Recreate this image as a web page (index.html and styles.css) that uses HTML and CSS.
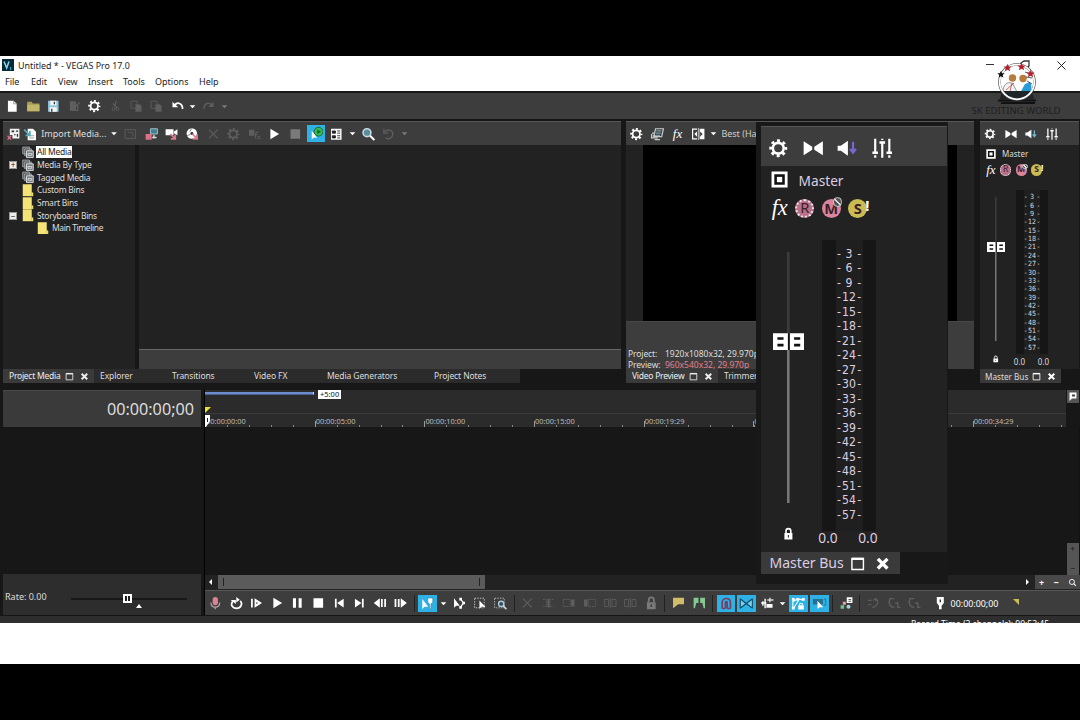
FILE: index.html
```html
<!DOCTYPE html>
<html lang="en">
<head>
  <meta charset="UTF-8" />
  <title>Untitled * - VEGAS Pro 17.0</title>
  <link rel="stylesheet" href="styles.css">
</head>
<body>
  <!-- Icon shapes, reused below -->
  <svg class="sprite" width="0" height="0">
    <symbol id="gear" viewBox="0 0 16 16"><circle cx="8" cy="8" r="4.2" fill="none" stroke="currentColor" stroke-width="2"/><circle cx="8" cy="8" r="5.900" fill="none" stroke="currentColor" stroke-width="2.200" stroke-dasharray="2.300 2.334" stroke-dashoffset="1.150"/></symbol>
    <symbol id="new" viewBox="0 0 16 16"><path d="M3 2h6.500L13 5.500V14.500H3z" fill="#fff"/><path d="M9.500 2v3.500H13" fill="none" stroke="#777" stroke-width=".8"/></symbol>
    <symbol id="folder" viewBox="0 0 16 16"><path d="M1 3h5l1.500 2H15v9H1z" fill="#a99d55"/><path d="M1 6.500h14V14H1z" fill="#c2b66b"/></symbol>
    <symbol id="save" viewBox="0 0 16 16"><path d="M2 2h12v12.500H2z" fill="#8cc6df"/><path d="M4.500 2h7v5h-7zM4 9.500h8v5H4z" fill="#f5f5f5"/><path d="M8.500 3h1.500v3H8.500zM5.500 11H7v3.500H5.500z" fill="#333"/></symbol>
    <symbol id="render" viewBox="0 0 16 16"><path d="M3 2.500h7v11H3z" fill="currentColor"/><path d="M8 10l6-6M12 7v6H6" fill="none" stroke="currentColor" stroke-width="1.500"/></symbol>
    <symbol id="cut" viewBox="0 0 16 16"><path d="M9 2L7.500 9M5 5l5 5" stroke="currentColor" stroke-width="1.300"/><circle cx="6" cy="11.500" r="1.700" fill="none" stroke="currentColor"/><circle cx="10.500" cy="11.500" r="1.700" fill="none" stroke="currentColor"/></symbol>
    <symbol id="copy" viewBox="0 0 16 16"><path d="M2 2.500h7v8H2z" fill="none" stroke="currentColor"/><path d="M7 6h5l2 2v6.500H7z" fill="currentColor"/></symbol>
    <symbol id="undo" viewBox="0 0 16 16"><path d="M2.500 3v6.500H9z" fill="currentColor"/><path d="M5 7c3-4 9-2.500 9 4.500" fill="none" stroke="currentColor" stroke-width="2"/></symbol>
    <symbol id="redo" viewBox="0 0 16 16"><path d="M14 3v6H8z" fill="currentColor"/><path d="M12 7C9 3 3 4.500 3 11.500" fill="none" stroke="currentColor" stroke-width="1.600"/></symbol>
    <symbol id="down" viewBox="0 0 8 8"><path d="M.8 2.500h6.400L4 6z" fill="currentColor"/></symbol>
    <symbol id="offline" viewBox="0 0 16 16"><path d="M4 2h11v11H7V9H4z" fill="#f2f2f2"/><path d="M6 4h3v2H6zM11 4h2.500v1.500H11zM9 8h1.500v1.500H9zM12 8h1.500v3H12z" fill="#333"/><path d="M1.500 10l4 4.500M5.500 10l-4 4.500" stroke="#d9758f" stroke-width="1.500"/></symbol>
    <symbol id="import" viewBox="0 0 16 16"><path d="M5 2h6l3.500 3.500V15H5z" fill="#fff"/><path d="M6.500 10h6M6.500 12.500h6" stroke="#999"/><path d="M1 3l6 6M7.500 4.500v5h-5" fill="none" stroke="#55a9bd" stroke-width="2"/></symbol>
    <symbol id="bracketbox" viewBox="0 0 16 16"><path d="M2 3h12v10H2zM5 6h6v5" fill="none" stroke="currentColor" stroke-width="1"/></symbol>
    <symbol id="capture" viewBox="0 0 16 16"><path d="M7 2h8v6H7z" fill="#477f91" stroke="#aacbd5"/><path d="M1.500 8h7v6.500h-7z" fill="#dc6f87"/><path d="M11 9v4M9 12h5" stroke="#ddd" stroke-width="1.500"/></symbol>
    <symbol id="camera" viewBox="0 0 16 16"><path d="M1.500 2.500h9v7h-9zM11 5l4-2.500v7L11 7z" fill="#fff"/><path d="M7 8l5 5M12.500 8.500v5h-5" fill="none" stroke="#d9798e" stroke-width="2"/></symbol>
    <symbol id="disc" viewBox="0 0 16 16"><circle cx="7.500" cy="7.500" r="6" fill="#fff"/><circle cx="7.500" cy="7.500" r="1.700" fill="#333"/><path d="M7.500 1.500L5 5.500M2 10l3.500-1.500" stroke="#777"/><path d="M8 8l5 5M13.500 8.500v5h-5" fill="none" stroke="#d9798e" stroke-width="2"/></symbol>
    <symbol id="x" viewBox="0 0 16 16"><path d="M3 3l10 10M13 3L3 13" stroke="currentColor" stroke-width="1.300"/></symbol>
    <symbol id="bigx" viewBox="0 0 16 16"><path d="M3 3l10 10M13 3L3 13" stroke="currentColor" stroke-width="3.500"/></symbol>
    <symbol id="max" viewBox="0 0 16 16"><path d="M2 2.500h12v11.500H2z" fill="none" stroke="currentColor" stroke-width="1.500"/><path d="M2 3h12" stroke="currentColor" stroke-width="2.500"/></symbol>
    <symbol id="mediafx" viewBox="0 0 16 16"><path d="M2 3h6v7H2z" fill="currentColor"/><path d="M9 13l1-7h3M8.500 8.500h3M11 10l4 4M15 10l-4 4" fill="none" stroke="currentColor" stroke-width="1.200"/></symbol>
    <symbol id="play" viewBox="0 0 16 16"><path d="M3.500 2l10 6-10 6z" fill="currentColor"/></symbol>
    <symbol id="stop" viewBox="0 0 16 16"><path d="M2.500 2.500h11v11h-11z" fill="currentColor"/></symbol>
    <symbol id="autoplay" viewBox="0 0 16 16"><circle cx="10.500" cy="6" r="4.800" fill="#35bd51" stroke="#17612c"/><path d="M9 3.500l4.500 2.500L9 8.500z" fill="#163"/><path d="M3 5v9.500l2.300-2 3.700.2z" fill="#fff"/></symbol>
    <symbol id="views" viewBox="0 0 16 16"><path d="M2 2h12v12.500H2z" fill="#fff"/><path d="M3.500 4.500H7V7H3.500zM9 4.500h3.500M9 7h3.500M3.500 10H7v2.500H3.500zM9 10h3.500M9 12.500h3.500" fill="#222" stroke="#222" stroke-width="1"/></symbol>
    <symbol id="search" viewBox="0 0 16 16"><circle cx="6.500" cy="6.500" r="4.500" fill="#5d8c9b" stroke="#c3dce5" stroke-width="1.800"/><path d="M10 10l5 5" stroke="#fff" stroke-width="2.300"/></symbol>
    <symbol id="refresh" viewBox="0 0 16 16"><path d="M3 2v5h5" fill="none" stroke="currentColor" stroke-width="1.600"/><path d="M4 6c3-5 10-2 9 3-.6 4-5 5.500-8 3.500" fill="none" stroke="currentColor" stroke-width="1.600"/></symbol>
    <symbol id="bins" viewBox="0 0 16 16"><path d="M1 1h9v9H1zM3.500 3.500h9v9h-9z" fill="#555" stroke="#9a9fa4" stroke-width="1.300"/><path d="M6 6h9v9H6z" fill="#777c82" stroke="#d5d9dc" stroke-width="1.300"/><path d="M8 9.500h5v2.500H8z" fill="none" stroke="#eee"/></symbol>
    <symbol id="bin" viewBox="0 0 16 16"><path d="M1 0h12v11h2v5H1z" fill="#f4e477"/><path d="M13 11v5" stroke="#cdb94d"/></symbol>
    <symbol id="external" viewBox="0 0 16 16"><path d="M6 2h9l-2 9H4zM2 7h3M3 10h8M5 14.500h6" fill="none" stroke="#c5ccd0" stroke-width="1.400"/><path d="M7 4.500h5.500M6.500 7H12M6 9.500h5" stroke="#7699a4" stroke-width="1.300"/><path d="M1.500 8v4.500h7" fill="none" stroke="#ccc" stroke-width="1.500"/></symbol>
    <symbol id="split" viewBox="0 0 16 16"><path d="M6.500 2.500h-5v11h5" fill="none" stroke="#fff" stroke-width="1.400"/><path d="M9.500 2h5.500v12H9.500z" fill="#fff"/><path d="M8 1v14" stroke="#ddd"/><path d="M6.500 5v6L3.500 8z" fill="#fff"/><path d="M10 5v6l3-3z" fill="#444"/></symbol>
    <symbol id="downmix" viewBox="0 0 16 16"><path d="M.5 2.500L7.200 6.800v2.400L.5 13.500zM15.500 2.500L8.800 6.800v2.400l6.700 4.300z" fill="#fff"/></symbol>
    <symbol id="dim" viewBox="0 0 16 16"><path d="M.5 6H3l5.500-3.800v11.600L3 10H.5z" fill="#fff"/><path d="M12.500 3v8M10.200 8.500l2.300 3 2.300-3" fill="none" stroke="var(--arrow)" stroke-width="1.700"/></symbol>
    <symbol id="sliders" viewBox="0 0 16 16"><path d="M2.500 .5v11M8 3v12.500M13.500 .5v11M2.500 13.500v2M8 .5v1M13.500 13.500v2" stroke="#fff" stroke-width="1.700"/><path d="M.3 10.500h4.400v2H.3zM5.800 2.500h4.400v2H5.800zM11.300 10.500h4.400v2h-4.400z" fill="#fff"/></symbol>
    <symbol id="target" viewBox="0 0 16 16"><path d="M1.800 1.800h12.400v12.400H1.800z" fill="#111" stroke="#fff" stroke-width="2.600"/><path d="M5.500 5.500h5v5h-5z" fill="#fff"/></symbol>
    <symbol id="lock" viewBox="0 0 16 16"><path d="M3 7h10v8H3z" fill="currentColor"/><path d="M5 7V4.500c0-4 6-4 6 0V7" fill="none" stroke="currentColor" stroke-width="2"/><path d="M7.300 9.500h1.400v3H7.300z" fill="#333"/></symbol>
    <symbol id="fader" viewBox="0 0 36 19"><path d="M0 0h17v19H0zM19 0h17v19H19z" fill="#fff"/><path d="M5 6h7M5 13.500h7M24 6h7M24 13.500h7" stroke="#111" stroke-width="3"/><path d="M17 0v19h2V0z" fill="#111"/></symbol>
    <symbol id="mic" viewBox="0 0 16 16"><rect x="5" y="1" width="6" height="9.500" rx="3" fill="#dc8293"/><path d="M3 7.500c0 7 10 7 10 0M8 12.500V15" fill="none" stroke="#b5a0a4" stroke-width="1.400"/></symbol>
    <symbol id="loop" viewBox="0 0 16 16"><path d="M4 6c-3 4-.5 8 4 8 5.500 0 7.500-5.500 4.500-8.500" fill="none" stroke="#fff" stroke-width="2"/><path d="M1.500 4.500h6V9zM8 1v6.500l4-3.200z" fill="#fff"/></symbol>
    <symbol id="playstart" viewBox="0 0 16 16"><path d="M2 3h2v10H2zM6 2.500L14.500 8 6 13.500z" fill="#fff"/><path d="M8 6.500v3l2-1.500z" fill="#555"/></symbol>
    <symbol id="pause" viewBox="0 0 16 16"><path d="M3 2.500h3.500v11H3zM9.500 2.500H13v11H9.500z" fill="#fff"/></symbol>
    <symbol id="first" viewBox="0 0 16 16"><path d="M3 3h2v10H3zM13 3v10L5.500 8z" fill="#fff"/></symbol>
    <symbol id="last" viewBox="0 0 16 16"><path d="M11 3h2v10h-2zM3 3v10l7.500-5z" fill="#fff"/></symbol>
    <symbol id="stepback" viewBox="0 0 16 16"><path d="M7.500 2.500v11L.5 8zM8.800 3.500h2v9h-2zM12.500 3.500h2v9h-2z" fill="#fff"/></symbol>
    <symbol id="stepfwd" viewBox="0 0 16 16"><path d="M8.500 2.500v11l7-5.500zM5.200 3.500h2v9h-2zM1.500 3.500h2v9h-2z" fill="#fff"/></symbol>
    <symbol id="edit" viewBox="0 0 16 16"><path d="M2.500 3v11l2.500-2.500 4 .2z" fill="#fff"/><path d="M8.500 2H14v4.500l-2 2V14h-1.500V8.500l-2-2z" fill="#fff" stroke="#277b9d" stroke-width=".6"/></symbol>
    <symbol id="envelope" viewBox="0 0 16 16"><path d="M2 2.500v11L4.500 11l4 .2z" fill="#fff"/><path d="M9 3l4 5-4 5" fill="none" stroke="#fff" stroke-width="1.400"/><path d="M8 2h3v3H8zM11.500 6.500h3v3h-3zM8 11.500h3v3H8z" fill="#fff"/></symbol>
    <symbol id="select" viewBox="0 0 16 16"><path d="M1.500 2.500h11v11h-11z" fill="none" stroke="#ccc" stroke-dasharray="1.700 1.300"/><path d="M7 5v9.500l2.500-2.200 4.500.2z" fill="#fff"/></symbol>
    <symbol id="zoomsel" viewBox="0 0 16 16"><path d="M1.500 2.500h11v11h-11z" fill="none" stroke="#bbb" stroke-dasharray="1.700 1.300"/><circle cx="9" cy="9" r="3" fill="#446" stroke="#a7cfd4" stroke-width="1.500"/><path d="M11.500 11.500L15 15" stroke="#cde" stroke-width="1.800"/></symbol>
    <symbol id="trim" viewBox="0 0 16 16"><path d="M2 4h4v8H2M14 4h-4v8h4" fill="none" stroke="currentColor" stroke-dasharray="2 1"/><path d="M7 3h2.500v10H7z" fill="currentColor"/></symbol>
    <symbol id="trimr" viewBox="0 0 16 16"><path d="M1 4h8v8H1z" fill="none" stroke="currentColor" stroke-dasharray="2 1"/><path d="M10 4h4v8h-4z" fill="currentColor"/></symbol>
    <symbol id="triml" viewBox="0 0 16 16"><path d="M7 4h8v8H7z" fill="none" stroke="currentColor" stroke-dasharray="2 1"/><path d="M2 4h4v8H2z" fill="currentColor"/></symbol>
    <symbol id="splitev" viewBox="0 0 16 16"><path d="M1.500 4H6v8H1.500zM10 4h4.500v8H10zM8 2v12" fill="none" stroke="currentColor"/></symbol>
    <symbol id="flag" viewBox="0 0 16 16"><path d="M2 2h12.500v7.500H8L2 14z" fill="#cfbd68"/></symbol>
    <symbol id="region" viewBox="0 0 16 16"><path d="M1.500 2H7v6H4.500L3 14H1.500zM9 2h5.500v12H13l-1.500-6H9z" fill="#86c990"/></symbol>
    <symbol id="snap" viewBox="0 0 16 16"><path d="M3.500 13.500V7c0-6 9-6 9 0v6.500M7 13.500V7.500c0-2 2-2 2 0v6M3.500 13.500H7M9 13.500h3.500" fill="none" stroke="#7c3b5d" stroke-width="1.800"/></symbol>
    <symbol id="crossfade" viewBox="0 0 16 16"><path d="M1.500 2.500v11M14.500 2.500v11M1.500 3l13 10M14.500 3l-13 10" fill="none" stroke="#174e67" stroke-width="1.500"/><path d="M2 4.500L6.500 8 2 11.500zM14 4.500L9.500 8l4.500 3.500z" fill="#7fcdec"/></symbol>
    <symbol id="ripple" viewBox="0 0 16 16"><path d="M1 8h6M5.500 3v11M3 6v5" stroke="#fff" stroke-width="1.600"/><path d="M7 9h7v4.500H7z" fill="#fff"/><path d="M8 4.500h7M11 2v5" stroke="#ddd" stroke-width="1.600"/></symbol>
    <symbol id="lockenv" viewBox="0 0 16 16"><path d="M2 13V6l5-3 6 1M3 13l5-8" fill="none" stroke="#fff" stroke-width="1.200"/><path d="M1 11.500h3v3H1zM1 2h3v3H1zM6 2h3v3H6zM12 2h3v3h-3z" fill="#fff"/><path d="M8 10h6v4.500H8z" fill="#fff"/><path d="M9.500 10V8h3v2" fill="none" stroke="#fff"/></symbol>
    <symbol id="ignore" viewBox="0 0 16 16"><path d="M1 3h11v6H1z" fill="#256f8f"/><path d="M13 3h2v7h-2" fill="none" stroke="#256f8f"/><path d="M6 5v9l2.300-2 4 .2z" fill="#fff"/></symbol>
    <symbol id="group" viewBox="0 0 16 16"><path d="M8.500 1.500H15V8H8.500z" fill="#fff"/><path d="M10.500 4h3M10.500 6h3" stroke="#444"/><path d="M1.500 10.500h4v4h-4z" fill="#6dc38a"/><path d="M4 6.500h3.500V10H4z" fill="#e7a1ad"/><circle cx="10.500" cy="12.200" r="2.300" fill="#a7d3e0"/></symbol>
    <symbol id="sync" viewBox="0 0 16 16"><path d="M2 5h4M2 10h4M8 5c3-3 6 0 5 3s-4 5-6 5M11 2v4" fill="none" stroke="currentColor" stroke-width="1.400"/></symbol>
    <symbol id="sync2" viewBox="0 0 16 16"><path d="M4 2C0 7 3 13 8 13M3 3h5M9 8h3v5h3" fill="none" stroke="currentColor" stroke-width="1.500"/></symbol>
    <symbol id="marker" viewBox="0 0 16 16"><path d="M4 1h8v7l-2.500 3V15h-3v-4L4 8z" fill="#fff"/><path d="M7.200 4h1.600v3H7.200z" fill="#333"/></symbol>
  </svg>

  <div class="window">
    <div class="titlebar">
      <svg class="app-icon" viewBox="0 0 12 12"><path d="M0 0h12v12H0z" fill="#062a38"/><path d="M2 2.500L4.700 9 7 2.500" fill="none" stroke="#8cd9ea" stroke-width="1.500"/><path d="M8.500 8v3" stroke="#28a6c9" stroke-width="1.200"/></svg>
      <span class="title">Untitled * - VEGAS Pro 17.0</span>
      <svg class="minimize" viewBox="0 0 8 8"><path d="M0 3.500h8" stroke="#333" stroke-width="1"/></svg>
      <svg class="close" viewBox="0 0 9 9"><path d="M.5.500l8 8M8.500.500l-8 8" stroke="#222" stroke-width="1"/></svg>
    </div>
    <div class="menubar">
      <span class="m-file">File</span><span class="m-edit">Edit</span><span class="m-view">View</span><span class="m-insert">Insert</span><span class="m-tools">Tools</span><span class="m-options">Options</span><span class="m-help">Help</span>
    </div>

    <div class="toolbar main-tools">
      <svg><use href="#new"/></svg><svg><use href="#folder"/></svg><svg><use href="#save"/></svg><svg class="off"><use href="#render"/></svg><svg><use href="#gear"/></svg><svg class="off"><use href="#cut"/></svg><svg class="off"><use href="#copy"/></svg><svg class="off"><use href="#copy"/></svg><svg><use href="#undo"/></svg><svg class="dd"><use href="#down"/></svg><svg class="off"><use href="#redo"/></svg><svg class="dd off2"><use href="#down"/></svg>
    </div>

    <div class="docks">
      <section class="media">
        <div class="toolbar">
          <svg><use href="#offline"/></svg><svg class="import-icon"><use href="#import"/></svg><span class="import">Import Media...</span><svg class="dd"><use href="#down"/></svg>
          <svg class="off"><use href="#bracketbox"/></svg><svg><use href="#capture"/></svg><svg><use href="#camera"/></svg><svg><use href="#disc"/></svg><svg class="off"><use href="#x"/></svg><svg class="off"><use href="#gear"/></svg><svg class="off"><use href="#mediafx"/></svg><svg><use href="#play"/></svg><svg class="off2"><use href="#stop"/></svg><svg class="on"><use href="#autoplay"/></svg><svg><use href="#views"/></svg><svg class="dd"><use href="#down"/></svg><svg><use href="#search"/></svg><svg class="off"><use href="#refresh"/></svg><svg class="dd off2"><use href="#down"/></svg>
        </div>
        <div class="media-body">
          <ul class="tree">
            <li><i></i><svg><use href="#bins"/></svg><span class="selected">All Media</span></li>
            <li><i class="box">+</i><svg><use href="#bins"/></svg><span>Media By Type</span></li>
            <li><i></i><svg><use href="#bins"/></svg><span>Tagged Media</span></li>
            <li><i></i><svg><use href="#bin"/></svg><span>Custom Bins</span></li>
            <li><i></i><svg><use href="#bin"/></svg><span>Smart Bins</span></li>
            <li><i class="box">−</i><svg><use href="#bin"/></svg><span>Storyboard Bins</span></li>
            <li class="child"><i></i><svg><use href="#bin"/></svg><span>Main Timeline</span></li>
          </ul>
          <div class="media-view"><div class="media-info"></div></div>
        </div>
        <div class="tabs">
          <div class="tab active t-media"><span>Project Media</span><svg><use href="#max"/></svg><svg><use href="#bigx"/></svg></div>
          <div class="tab t-explorer">Explorer</div>
          <div class="tab t-trans">Transitions</div>
          <div class="tab t-fx">Video FX</div>
          <div class="tab t-gen">Media Generators</div>
          <div class="tab t-notes">Project Notes</div>
        </div>
      </section>

      <section class="preview">
        <div class="toolbar">
          <svg><use href="#gear"/></svg><svg><use href="#external"/></svg><span class="fx">fx</span><svg><use href="#split"/></svg><svg class="dd"><use href="#down"/></svg><span class="quality">Best (Half)</span>
        </div>
        <div class="video"><div class="screen"></div></div>
        <div class="preview-info">
          <div><b>Project:</b><span>1920x1080x32, 29.970p</span></div>
          <div><b>Preview:</b><span class="pink">960x540x32, 29.970p</span></div>
        </div>
        <div class="tabs">
          <div class="tab active t-preview"><span>Video Preview</span><svg><use href="#max"/></svg><svg><use href="#bigx"/></svg></div>
          <div class="tab t-trimmer">Trimmer</div>
        </div>
      </section>

      <section class="mixer">
        <div class="mixer-head">
          <svg><use href="#gear"/></svg><svg><use href="#downmix"/></svg><svg><use href="#dim"/></svg><svg><use href="#sliders"/></svg>
        </div>
        <div class="mixer-body">
          <div class="bus-name"><svg><use href="#target"/></svg><span>Master</span></div>
          <div class="bus-fx"><span class="fx">fx</span><span class="auto">R</span><span class="mute">M<i></i></span><span class="solo">S<i>!</i></span></div>
          <div class="channel">
            <div class="fader"><svg class="thumb"><use href="#fader"/></svg></div>
            <div class="meter">
              <div class="scale"><span>3</span><span>6</span><span>9</span><span>12</span><span>15</span><span>18</span><span>21</span><span>24</span><span>27</span><span>30</span><span>33</span><span>36</span><span>39</span><span>42</span><span>45</span><span>48</span><span>51</span><span>54</span><span>57</span></div>
            </div>
          </div>
          <div class="levels"><svg><use href="#lock"/></svg><span>0.0</span><span>0.0</span></div>
        </div>
        <div class="mixer-tab"><span>Master Bus</span><svg><use href="#max"/></svg><svg><use href="#bigx"/></svg></div>
      </section>
    </div>

    <div class="timeline">
      <div class="track-side">
        <div class="timecode">00:00:00;00</div>
        <div class="tracks"></div>
        <div class="rate">
          <span>Rate: 0.00</span>
          <div class="rate-slider"><i class="rate-thumb"></i><i class="rate-mark"></i></div>
        </div>
      </div>
      <div class="track-main">
        <div class="ruler-row">
          <div class="ruler">
            <div class="loop-bar"><div class="loop-line"></div><span>+5:00</span></div>
            <div class="ticks">
              <span>00:00:00:00</span><span>00:00:05:00</span><span>00:00:10:00</span><span>00:00:15:00</span><span>00:00:19:29</span><span>00:00:24:29</span><span>00:00:29:29</span><span>00:00:34:29</span>
            </div>
            <svg class="playhead" viewBox="0 0 6 22"><path d="M0 0h6L0 6z" fill="#e9e92a"/><path d="M0 8h5v6l-4 6H0z" fill="#fff"/><path d="M2 11h1v4H2z" fill="#222"/></svg>
          </div>
          <svg class="corner" viewBox="0 0 12 13"><path d="M0 0h12v13H0z" fill="#555"/><path d="M2.500 2.500h7v6H5L2.500 11z" fill="#fff"/><path d="M5 4.500h3v2H5z" fill="#444"/></svg>
        </div>
        <div class="events"><div class="vzoom"><span>+</span><span>−</span></div></div>
        <div class="scroll-row">
          <div class="arrow left"></div>
          <div class="scroll-thumb"><i></i><i></i></div>
          <div class="track"></div>
          <div class="arrow right"></div>
          <div class="hzoom"><span>+</span><span>−</span><svg viewBox="0 0 16 16"><circle cx="7" cy="7" r="4.500" fill="none" stroke="#fff" stroke-width="1.600"/><path d="M10 10l4 4" stroke="#fff" stroke-width="2"/></svg></div>
        </div>
        <div class="toolbar transport">
          <svg><use href="#mic"/></svg><svg><use href="#loop"/></svg><svg><use href="#playstart"/></svg><svg><use href="#play"/></svg><svg><use href="#pause"/></svg><svg><use href="#stop"/></svg><svg><use href="#first"/></svg><svg><use href="#last"/></svg><svg><use href="#stepback"/></svg><svg><use href="#stepfwd"/></svg><i class="sep"></i>
          <svg class="on"><use href="#edit"/></svg><svg class="dd"><use href="#down"/></svg><svg><use href="#envelope"/></svg><svg><use href="#select"/></svg><svg><use href="#zoomsel"/></svg><i class="sep"></i>
          <svg class="off"><use href="#x"/></svg><svg class="off"><use href="#trim"/></svg><svg class="off"><use href="#trimr"/></svg><svg class="off"><use href="#triml"/></svg><svg class="off"><use href="#splitev"/></svg><svg class="off"><use href="#splitev"/></svg><svg class="off2"><use href="#lock"/></svg><i class="sep"></i>
          <svg><use href="#flag"/></svg><svg><use href="#region"/></svg><i class="sep"></i>
          <svg class="on"><use href="#snap"/></svg><svg class="on"><use href="#crossfade"/></svg><svg><use href="#ripple"/></svg><svg class="dd"><use href="#down"/></svg><svg class="on"><use href="#lockenv"/></svg><svg class="on"><use href="#ignore"/></svg><i class="sep"></i>
          <svg><use href="#group"/></svg><i class="sep"></i>
          <svg class="off"><use href="#sync"/></svg><svg class="off"><use href="#sync2"/></svg><svg class="off"><use href="#sync2"/></svg>
          <svg class="cursor-icon"><use href="#marker"/></svg><span class="cursor-time">00:00:00;00</span><i class="sel-corner"></i>
        </div>
      </div>
    </div>
    <div class="status"><span>Record Time (2 channels): 90:53:45</span></div>

    <!-- Channel logo, on top of the title bar -->
    <div class="logo">
      <svg viewBox="0 0 42 44">
        <path d="M25 8V3l3-2h5v5l-3 3z" fill="#fff" stroke="#333" stroke-width="1.300"/>
        <circle cx="21" cy="22" r="18" fill="#fff"/>
        <path d="M7 30c1-7 6-9 10-6l4 8H9z" fill="#f3f3f3" stroke="#555" stroke-width=".6"/>
        <path d="M10 30l8-7M14 31l2-8" stroke="#b33" stroke-width=".7"/>
        <path d="M24 33l5-9 5-2c2 3 2 7 0 11z" fill="#299bd6"/>
        <circle cx="16.500" cy="18" r="3.700" fill="#b77b3b"/><circle cx="27" cy="18.500" r="3.700" fill="#b77b3b"/>
        <path d="M29 12l6 2M30 17l6 1M31 21l5 3" stroke="#333" stroke-width=".8"/>
        <path d="M6 31h30l2 8H4z" fill="#20252a"/><path d="M2 40.500h38M5 43h34" stroke="#111" stroke-width="2"/>
        <circle cx="21" cy="22" r="17.500" fill="none" stroke="#444" stroke-width="2.600"/>
        <circle cx="21" cy="22" r="17.300" fill="none" stroke="#fff" stroke-width="1.800"/>
        <path id="star" d="M11.500 4l1.300 2.500h2.700l-2.100 1.900.7 2.800-2.600-1.500-2.600 1.500.7-2.800-2.100-1.900h2.700z" fill="#b21f2b"/>
        <use href="#star" x="14" y="-1"/><use href="#star" x="23" y="6"/><path d="M5 11l1.200 2.300h2.500l-2 1.700.7 2.500L5 16.200l-2.400 1.300.7-2.500-2-1.700h2.500z" fill="#111"/>
      </svg>
      <div>SK EDITING WORLD</div>
    </div>

    <!-- Magnified Master Bus -->
    <div class="callout">
      <section class="mixer large">
        <div class="mixer-head">
          <svg><use href="#gear"/></svg><svg><use href="#downmix"/></svg><svg><use href="#dim"/></svg><svg><use href="#sliders"/></svg>
        </div>
        <div class="mixer-body">
          <div class="bus-name"><svg><use href="#target"/></svg><span>Master</span></div>
          <div class="bus-fx"><span class="fx">fx</span><span class="auto">R</span><span class="mute">M<i></i></span><span class="solo">S<i>!</i></span></div>
          <div class="channel">
            <div class="fader"><svg class="thumb"><use href="#fader"/></svg></div>
            <div class="meter">
              <div class="scale"><span>3</span><span>6</span><span>9</span><span>12</span><span>15</span><span>18</span><span>21</span><span>24</span><span>27</span><span>30</span><span>33</span><span>36</span><span>39</span><span>42</span><span>45</span><span>48</span><span>51</span><span>54</span><span>57</span></div>
            </div>
          </div>
          <div class="levels"><svg><use href="#lock"/></svg><span>0.0</span><span>0.0</span></div>
        </div>
        <div class="mixer-tab"><span>Master Bus</span><svg><use href="#max"/></svg><svg><use href="#bigx"/></svg></div>
      </section>
    </div>
  </div>
</body>
</html>
```
FILE: styles.css
```css
* {
  box-sizing: border-box;
}
body {
  margin: 0;
  padding: 56px 0;
  height: 720px;
  background: #000;
  overflow: hidden;
  font-family: "Noto Sans", sans-serif;
  font-size: 9px;
  color: #ddd;
}
i {
  font-style: normal;
}
.sprite {
  position: absolute;
}
.window {
  position: relative;
  height: 608px;
  background: #fff;
  white-space: nowrap;
}
/* Title and menu */
.titlebar {
  display: flex;
  align-items: center;
  height: 18px;
  padding-left: 2px;
  color: #222;
}
.app-icon {
  width: 12px;
  height: 12px;
}
.title {
  flex: 1;
  margin-left: 4px;
  font-size: 8.9px;
}
.minimize {
  width: 8px;
  height: 8px;
  margin-right: 63px;
}
.close {
  width: 9px;
  height: 9px;
  margin-right: 14px;
}
.menubar {
  display: flex;
  align-items: center;
  height: 17px;
  padding: 0 0 2px 5px;
  color: #222;
}
.m-file { width: 26px; }
.m-edit { width: 27px; }
.m-view { width: 30px; }
.m-insert { width: 35px; }
.m-tools { width: 32px; }
.m-options { width: 44px; }
/* Toolbars */
.toolbar {
  display: flex;
  align-items: center;
  height: 24px;
  background: #3d3d3d;
  border-top: 1px solid #575757;
  color: #fff;
}
.toolbar > svg {
  flex: none;
  width: 20.6px;
  height: 18px;
  padding: 2px 3px;
}
.toolbar > .dd {
  width: 11px;
  height: 7px;
  padding: 0 1px;
}
.toolbar > .off {
  color: #5e5e5e;
}
.toolbar > .off2 {
  color: #7a7a7a;
}
.toolbar > .on {
  width: 18.600px;
  height: 17px;
  margin: 0 1px;
  padding: 1px 2px;
  background: #2eb2e6;
}
.main-tools {
  height: 30px;
  padding-left: 2px;
  border-top: 2px solid #171717;
  border-bottom: 2px solid #151515;
}
.fx {
  font-family: "Liberation Serif", serif;
  font-style: italic;
}
.toolbar .fx {
  width: 20.600px;
  text-align: center;
  font-size: 13px;
}
/* Docked windows */
.docks {
  display: flex;
  height: 269px;
  background: #171717;
}
.media {
  width: 618px;
  margin-left: 3px;
}
.import-icon {
  margin: 0 -1px 0 -4px;
}
.import {
  width: 69px;
  padding-left: 2px;
  font-size: 9px;
  color: #ddd;
}
.media > .toolbar > .import-icon + .import + .dd {
  width: 12px;
}
.media-body {
  display: flex;
  height: 224px;
}
.tree {
  width: 132px;
  margin: 0 4px 0 0;
  padding: 1px 0 0 6px;
  list-style: none;
  background: #222;
}
.tree li {
  display: flex;
  align-items: center;
  height: 12.650px;
}
.tree li i {
  width: 8px;
  margin-right: 5px;
}
.tree .box {
  height: 8px;
  background: #eee;
  border: 1px solid #999;
  color: #111;
  font-size: 8px;
  line-height: 5px;
  text-align: center;
}
.tree svg {
  width: 12px;
  height: 12.650px;
}
.tree span {
  margin-left: 2px;
  padding: 0 1px;
  line-height: 12px;
  font-size: 8.500px;
  letter-spacing: -.25px;
}
.tree .selected {
  background: #fff;
  color: #222;
}
.tree .child {
  padding-left: 15px;
}
.tree .child span {
  letter-spacing: -.4px;
}
.media-view {
  display: flex;
  flex: 1;
  align-items: flex-end;
  background: #222;
}
.media-info {
  flex: 1;
  height: 20px;
  background: #3d3d3d;
  border-top: 1px solid #666;
}
.tabs {
  display: flex;
  height: 14px;
}
.tab {
  background: #2b2b2b;
  padding-left: 6px;
  line-height: 14.500px;
  font-size: 8.500px;
  letter-spacing: -.1px;
}
.tab.active {
  display: flex;
  align-items: center;
  background: #3a3a3a;
  color: #eee;
}
.tab.active span {
  letter-spacing: -.25px;
}
.tab svg {
  width: 9px;
  height: 9px;
  margin: 1px 5.500px 0 0;
}
.t-media { width: 91px; }
.t-media span { width: 57px; }
.t-explorer { width: 72px; }
.t-trans { width: 82px; }
.t-fx { width: 73px; }
.t-gen { width: 107px; }
.t-notes { width: 92px; }
.t-preview { width: 92px; }
.t-preview span { width: 58px; }
.t-trimmer { width: 90px; }
.preview {
  width: 348px;
  margin: 0 6px 0 5px;
}
.preview .quality {
  margin-left: 2px;
  color: #ccc;
}
.video {
  height: 176px;
  padding: 0 17px;
  background: #222;
}
.screen {
  height: 176px;
  background: #000;
}
.preview-info {
  height: 48px;
  padding: 27px 0 0 2px;
  background: #3d3d3d;
  border-top: 1px solid #484848;
  font-size: 8.500px;
  line-height: 10.500px;
}
.preview-info div {
  display: flex;
}
.preview-info b {
  width: 37px;
  font-weight: normal;
  letter-spacing: -.1px;
}
.pink {
  color: #e0808f;
}
/* Master bus, everything in em so the same markup can be magnified */
.mixer {
  --arrow: #6cb8cf;
  width: 9.900em;
  font-size: 10px;
}
.mixer-head {
  display: flex;
  align-items: center;
  height: 2.400em;
  background: #3d3d3d;
  border-top: 1px solid #575757;
  color: #fff;
}
.mixer-head svg {
  width: 1.200em;
  height: 1.200em;
  margin: .1em .43em 0;
}
.mixer-body {
  height: 22.400em;
  background: #222;
}
.bus-name {
  display: flex;
  align-items: center;
  height: 1.700em;
  padding-left: .6em;
}
.bus-name svg {
  width: 1em;
  height: 1em;
}
.bus-name span {
  margin-left: .75em;
  font-size: .8em;
}
.bus-fx {
  display: flex;
  align-items: center;
  height: 1.600em;
  padding-left: .25em;
}
.bus-fx > span {
  position: relative;
  width: 1.300em;
  height: 1.300em;
  margin-right: .5em;
  border-radius: 50%;
  font-size: .86em;
  line-height: 1.300em;
  text-align: center;
  color: #3a2029;
}
.bus-fx > .fx {
  margin-right: .05em;
  font-size: 1.300em;
  color: #fff;
}
.bus-fx .auto {
  background: #b9718a;
  border: .18em dotted #f0e6ea;
  line-height: .94em;
}
.mute {
  background: #dc849b;
  font-weight: bold;
}
.mute i {
  position: absolute;
  top: -.1em;
  right: -.1em;
  width: .65em;
  height: .65em;
  border: .12em solid #ccc;
  border-radius: 50%;
  background: linear-gradient(45deg, #555 40%, #ddd 42% 58%, #555 60%);
}
.solo {
  background: #c9bc52;
  font-weight: bold;
}
.solo i {
  position: absolute;
  top: -.2em;
  right: -.15em;
  color: #fff;
}
.channel {
  display: flex;
  height: 16.400em;
  margin-top: 1.200em;
}
.fader {
  position: relative;
  width: 3.200em;
  height: 14.400em;
  margin: .7em .4em 0 0;
  background: linear-gradient(#3c3c3c 35%, #777 36%) center / .15em 100% no-repeat;
}
.thumb {
  position: absolute;
  left: .68em;
  top: 4.500em;
  width: 1.850em;
  height: 1em;
}
.meter {
  width: 3.200em;
  height: 100%;
  padding-top: .33em;
  background: linear-gradient(90deg, #161616 .8em, #1f1f1f .8em 2.400em, #161616 2.400em);
}
.scale {
  display: flex;
  flex-direction: column;
  align-items: center;
  font-family: "DejaVu Sans Condensed", "DejaVu Sans", sans-serif;
}
.scale span {
  display: flex;
  justify-content: space-between;
  width: 2.100em;
  height: 1.178em;
  font-size: .71em;
  line-height: 1.178em;
}
.scale span::before,
.scale span::after {
  content: "-";
}
.levels {
  display: flex;
  align-items: center;
  height: 1.400em;
}
.levels svg {
  width: .75em;
  height: .8em;
  margin: -.4em .8em 0 1.200em;
  color: #fff;
}
.levels span {
  width: 3em;
  text-align: center;
  font-size: .8em;
}
.mixer-tab {
  display: flex;
  align-items: center;
  width: 8.100em;
  height: 1.400em;
  padding-left: .5em;
  background: #3a3a3a;
}
.mixer-tab span {
  width: 5.750em;
  font-size: .82em;
}
.mixer-tab svg {
  width: .9em;
  height: .9em;
  margin: .1em .55em 0 0;
  color: #fff;
}
/* Timeline */
.timeline {
  display: flex;
  height: 225px;
  padding-left: 3px;
  background: #171717;
}
.track-side {
  width: 198px;
  margin-right: 3px;
}
.timecode {
  height: 37px;
  padding-right: 7px;
  background: #3a3a3a;
  border-top: 1px solid #484848;
  text-align: right;
  font-size: 16.200px;
  line-height: 37px;
}
.tracks {
  height: 147px;
}
.rate {
  display: flex;
  height: 41px;
  padding: 0 0 0 2px;
  background: #2d2d2d;
  line-height: 46px;
}
.rate span {
  width: 66px;
}
.rate-slider {
  position: relative;
  width: 116px;
  height: 2px;
  margin-top: 24px;
  background: #181818;
}
.rate-thumb {
  position: absolute;
  left: 52px;
  top: -4px;
  width: 9px;
  height: 9px;
  border: 2px solid #fff;
  background: linear-gradient(90deg, #222 2px, #fff 2px 3px, #222 3px);
}
.rate-mark {
  position: absolute;
  left: 65px;
  top: 6px;
  border: 3px solid transparent;
  border-top: 0;
  border-bottom: 4px solid #fff;
}
.track-main {
  flex: 1;
  border-left: 1px solid #000;
}
.ruler-row {
  display: flex;
  height: 37px;
}
.ruler {
  position: relative;
  width: 861px;
  overflow: hidden;
  background: #2b2b2b;
}
.loop-bar {
  display: flex;
  height: 24px;
  border-bottom: 1px solid #3b3b3b;
}
.loop-line {
  width: 109px;
  height: 3px;
  margin: 2px 4px 0 0;
  background: #6e8ccb;
  border-bottom: 1px solid #4a5f92;
  border-right: 1px solid #ccd;
}
.loop-bar span {
  height: 9px;
  padding: 0 2px;
  background: #fff;
  color: #111;
  font-size: 7.500px;
  line-height: 9px;
}
.ticks {
  display: flex;
  width: 900px;
  height: 13px;
  background: repeating-linear-gradient(90deg, #888 0 1px, transparent 1px 21.940px) left bottom / 100% 2px no-repeat;
}
.ticks span {
  width: 109.700px;
  padding-left: 1px;
  background: linear-gradient(#999, #999) left bottom / 1px 6px no-repeat;
  color: #bbb;
  font-size: 7.400px;
  line-height: 14px;
}
.playhead {
  position: absolute;
  left: 0;
  top: 17px;
  width: 6px;
  height: 22px;
}
.corner {
  width: 12px;
  height: 13px;
  margin-left: 1px;
}
.events {
  display: flex;
  height: 148px;
  justify-content: flex-end;
  align-items: flex-end;
  border-right: 1px solid #111;
}
.vzoom {
  display: flex;
  flex-direction: column;
  justify-content: space-between;
  width: 12px;
  height: 32px;
  padding: 1px 3px;
  background: #555;
  color: #222;
}
.vzoom span {
  line-height: 10px;
}
.scroll-row {
  display: flex;
  height: 15px;
  padding-bottom: 1px;
  background: #222;
}
.arrow {
  width: 13px;
  padding: 4px 4px;
}
.arrow::before {
  content: "";
  display: block;
  width: 0;
  border: 3px solid transparent;
}
.arrow.left::before {
  border-left: 0;
  border-right-color: #fff;
}
.arrow.right::before {
  border-right: 0;
  border-left-color: #fff;
}
.scroll-thumb {
  display: flex;
  justify-content: space-between;
  width: 267px;
  padding: 3px 5px;
  background: #5b5b5b;
}
.scroll-thumb i {
  width: 1px;
  background: #222;
}
.track {
  flex: 1;
}
.hzoom {
  display: flex;
  width: 45px;
  align-items: center;
  justify-content: space-between;
  padding: 0 3px 0 4px;
  background: #484848;
  color: #fff;
  font-weight: bold;
}
.hzoom svg {
  width: 9px;
  height: 9px;
}
.transport {
  height: 25px;
}
.sep {
  width: 1px;
  height: 17px;
  margin: 0 2.750px;
  background: #222;
}
.transport > .cursor-icon {
  margin-left: 5px;
}
.cursor-time {
  width: 62px;
  font-size: 8.900px;
}
.sel-corner {
  margin-top: -3px;
  border: 3px solid transparent;
  border-top-color: #c9bf50;
  border-right-color: #c9bf50;
}
.status {
  height: 8px;
  padding-left: 911px;
  overflow: hidden;
  border-top: 1px solid #151515;
  background: #2e2e2e;
  color: #fff;
  font-size: 8.500px;
  line-height: 16.500px;
}
/* Floating pieces */
.logo {
  position: absolute;
  left: 970px;
  top: 4px;
  width: 92px;
  color: #202020;
  text-align: center;
  font-size: 9.600px;
  line-height: 12px;
}
.logo svg {
  display: block;
  width: 42px;
  height: 44px;
  margin: 0 auto 1px 26px;
}
.callout {
  position: absolute;
  left: 756px;
  top: 66px;
  width: 192px;
  height: 462px;
  padding: 4px 0 0 5px;
  background: #181818;
}
.large {
  --arrow: #7568cf;
  width: 186px;
  font-size: 17.100px;
  color: #dccfe4;
}
.large .mixer-head {
  height: 2.310em;
}
.large .mixer-head svg {
  margin: .2em .41em 0;
}
.large .mixer-body {
  height: 22.600em;
}
.large .channel {
  height: 17em;
  margin-top: 1.050em;
}
.large .fader {
  height: 14.700em;
  margin-right: .35em;
}
.large .thumb {
  top: 4.750em;
}
.large .meter {
  padding-top: .39em;
}
.large .scale span {
  width: 2em;
  height: 1.195em;
  line-height: 1.195em;
}
.large .levels {
  height: .8em;
}
.large .levels span {
  width: 2.920em;
}
.large .mixer-tab {
  height: 1.300em;
  padding-bottom: .05em;
}
```
